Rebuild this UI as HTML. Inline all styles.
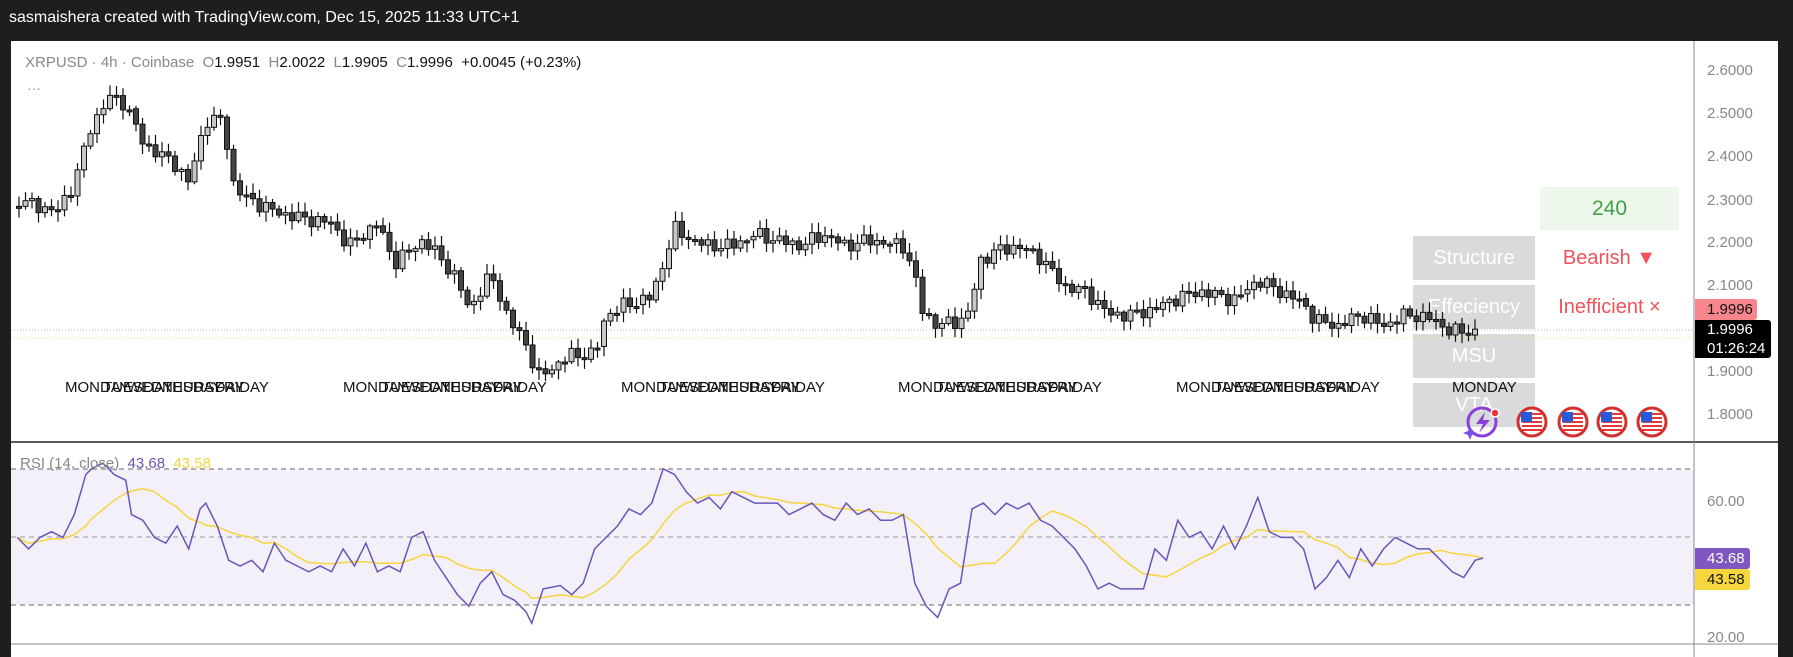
<!DOCTYPE html>
<html><head><meta charset="utf-8"><style>
html,body{margin:0;padding:0;}
body{width:1793px;height:657px;background:#1e1e1e;position:relative;overflow:hidden;font-family:"Liberation Sans",sans-serif;}
.t{position:absolute;white-space:nowrap;}
</style></head><body>
<div class="t" style="left:9px;top:9px;color:#fff;font-size:16px;">sasmaishera created with TradingView.com, Dec 15, 2025 11:33 UTC+1</div>
<div style="position:absolute;left:11px;top:41px;width:1767px;height:616px;background:#fff;"></div>
<div class="t" style="left:1413px;top:236px;width:122px;height:44px;background:#d9dadb;color:#fff;font-size:20px;line-height:44px;text-align:center;">Structure</div>
<div class="t" style="left:1413px;top:285px;width:122px;height:44px;background:#d9dadb;color:#fff;font-size:20px;line-height:44px;text-align:center;">Effeciency</div>
<div class="t" style="left:1413px;top:334px;width:122px;height:44px;background:#d9dadb;color:#fff;font-size:20px;line-height:44px;text-align:center;">MSU</div>
<div class="t" style="left:1413px;top:383px;width:122px;height:44px;background:#d9dadb;color:#fff;font-size:20px;line-height:44px;text-align:center;">VTA</div>
<svg id="s" width="1793" height="657" style="position:absolute;left:0;top:0;">
<rect x="11" y="469" width="1683" height="136" fill="#f3f0fa"/>
<line x1="11" y1="442" x2="1778" y2="442" stroke="#222" stroke-width="1.5"/>
<line x1="11" y1="644" x2="1778" y2="644" stroke="#888" stroke-width="1"/>
<line x1="1694" y1="41" x2="1694" y2="657" stroke="#888" stroke-width="1"/>
<line x1="11" y1="469" x2="1694" y2="469" stroke="#666" stroke-dasharray="5,4"/>
<line x1="11" y1="537" x2="1694" y2="537" stroke="#999" stroke-dasharray="5,4"/>
<line x1="11" y1="605" x2="1694" y2="605" stroke="#666" stroke-dasharray="5,4"/>
<line x1="11" y1="330" x2="1694" y2="330" stroke="#bbb" stroke-dasharray="1,2"/>
<line x1="11" y1="338" x2="1694" y2="338" stroke="#e8e070" stroke-dasharray="1,2"/>
<g id="c"></g>
<polyline id="ma" fill="none" stroke="#f5d63d" stroke-width="1.5"/>
<polyline id="rsi" fill="none" stroke="#6a55b8" stroke-width="1.5"/>
</svg>
<div class="t" style="left:25px;top:54px;font-size:15px;color:#888;">XRPUSD · 4h · Coinbase &nbsp;O<span style="color:#111">1.9951</span> &nbsp;H<span style="color:#111">2.0022</span> &nbsp;L<span style="color:#111">1.9905</span> &nbsp;C<span style="color:#111">1.9996</span> &nbsp;<span style="color:#111">+0.0045 (+0.23%)</span></div>
<div class="t" style="left:27px;top:80px;font-size:14px;color:#999;">···</div>
<div id="days"></div>
<div class="t" style="left:1452px;top:379px;font-size:15px;color:#111;">MONDAY</div>
<div class="t" style="left:1540px;top:187px;width:139px;height:43px;background:#eef7ec;color:#43a047;font-size:21px;line-height:43px;text-align:center;">240</div>
<div class="t" style="left:1540px;top:247px;width:139px;color:#f0525a;font-size:20px;text-align:center;">Bearish ▼</div>
<div class="t" style="left:1540px;top:296px;width:139px;color:#f0525a;font-size:20px;text-align:center;">Inefficient ×</div>
<svg width="1793" height="657" style="position:absolute;left:0;top:0;">
<g id="fl"></g>
<circle cx="1482" cy="422" r="14" fill="none" stroke="#8b3fd9" stroke-width="3"/>
<path d="M1485 412 L1476 424 L1483 424 L1479 433 L1490 420 L1483 420 Z" fill="#8b3fd9"/>
<circle cx="1495" cy="413" r="4" fill="#e5333d" stroke="#fff" stroke-width="1.5"/>
<path d="M1470 426 l2 5 5 2 -5 2 -2 5 -2 -5 -5 -2 5 -2z" fill="#7a4ee8"/>
</svg>
<div class="t" style="left:1707px;top:62px;font-size:15px;color:#888;">2.6000</div>
<div class="t" style="left:1707px;top:105px;font-size:15px;color:#888;">2.5000</div>
<div class="t" style="left:1707px;top:148px;font-size:15px;color:#888;">2.4000</div>
<div class="t" style="left:1707px;top:192px;font-size:15px;color:#888;">2.3000</div>
<div class="t" style="left:1707px;top:234px;font-size:15px;color:#888;">2.2000</div>
<div class="t" style="left:1707px;top:277px;font-size:15px;color:#888;">2.1000</div>
<div class="t" style="left:1707px;top:363px;font-size:15px;color:#888;">1.9000</div>
<div class="t" style="left:1707px;top:406px;font-size:15px;color:#888;">1.8000</div>
<div class="t" style="left:1695px;top:299px;width:62px;height:21px;background:#f7868c;border-radius:0 3px 3px 0;color:#111;font-size:15px;line-height:21px;padding-left:12px;box-sizing:border-box;">1.9996</div>
<div class="t" style="left:1695px;top:320px;width:76px;height:38px;background:#000;border-radius:0 3px 3px 0;color:#fff;font-size:15px;line-height:19px;padding-left:12px;box-sizing:border-box;">1.9996<br>01:26:24</div>
<div class="t" style="left:1707px;top:493px;font-size:15px;color:#888;">60.00</div>
<div class="t" style="left:1707px;top:629px;font-size:15px;color:#888;">20.00</div>
<div class="t" style="left:1695px;top:548px;width:55px;height:21px;background:#7e57c2;border-radius:0 3px 3px 0;color:#fff;font-size:15px;line-height:21px;padding-left:12px;box-sizing:border-box;">43.68</div>
<div class="t" style="left:1695px;top:569px;width:55px;height:21px;background:#f5d63d;border-radius:0 3px 3px 0;color:#111;font-size:15px;line-height:21px;padding-left:12px;box-sizing:border-box;">43.58</div>
<div class="t" style="left:20px;top:455px;font-size:15px;color:#888;">RSI (14, close) &nbsp;<span style="color:#6a55b8">43.68</span> &nbsp;<span style="color:#f5d63d">43.58</span></div>
<script>
(function(){
var S=1.1435,NS="http://www.w3.org/2000/svg";
var kp=[[15,175],[50,185],[65,160],[80,110],[95,85],[110,90],[125,125],[140,135],[155,145],[165,160],[180,105],[195,105],[205,165],[220,175],[240,185],[260,190],[290,195],[305,215],[330,195],[345,230],[370,210],[385,225],[400,245],[410,270],[430,240],[445,280],[460,300],[470,330],[485,320],[500,310],[520,310],[530,275],[550,265],[570,260],[580,230],[590,200],[605,210],[620,215],[640,215],[660,205],[680,210],[700,215],[720,205],[740,215],[760,210],[790,215],[800,240],[805,270],[820,285],[840,280],[850,270],[855,230],[870,220],[890,215],[910,225],[930,250],[950,255],[970,275],[990,275],[1010,270],[1030,260],[1050,255],[1080,262],[1100,245],[1120,255],[1140,265],[1150,280],[1170,285],[1190,275],[1210,285],[1230,275],[1250,278],[1270,290],[1290,290]];
function interp(a,x){for(var i=0;i<a.length-1;i++){if(x<=a[i+1][0]){var t=(x-a[i][0])/(a[i+1][0]-a[i][0]);return a[i][1]+t*(a[i+1][1]-a[i][1]);}}return a[a.length-1][1];}
var g=document.getElementById('c'),prev=null;
function el(n,at){var e=document.createElementNS(NS,n);for(var k in at)e.setAttribute(k,at[k]);return e;}
for(var x=19;x<=1478;x+=6.5){
 var xd=x/S,y=interp(kp,xd)*S+Math.sin(x*0.37)*5+Math.sin(x*1.7)*3;
 var o=prev===null?y:prev;var c=y;
 if(Math.abs(o-c)<2){c=o+2;}
 var tp=Math.min(o,c)-2-Math.abs(Math.sin(x*0.9))*8,bt=Math.max(o,c)+2+Math.abs(Math.cos(x*1.3))*8;
 var bull=c<o;
 g.appendChild(el('line',{x1:x,y1:tp,x2:x,y2:bt,stroke:'#111','stroke-width':1.2}));
 g.appendChild(el('rect',{x:x-2.5,y:Math.min(o,c),width:5,height:Math.abs(o-c),fill:bull?'#c8c8c8':'#444',stroke:'#111','stroke-width':1}));
 prev=y;
}
var rp=[[15,470],[25,480],[35,470],[45,465],[55,470],[65,450],[75,415],[80,410],[90,405],[100,415],[110,420],[115,450],[125,455],[135,470],[145,475],[155,460],[165,480],[175,445],[180,440],[190,460],[200,490],[210,495],[220,490],[230,500],[240,475],[250,490],[260,495],[270,500],[280,495],[290,500],[300,480],[310,495],[320,475],[330,500],[340,495],[350,500],[360,470],[370,465],[380,490],[390,505],[400,520],[410,530],[420,510],[430,500],[440,520],[450,525],[460,535],[465,545],[475,515],[490,512],[500,520],[510,510],[520,480],[530,470],[540,460],[550,445],[560,450],[570,440],[580,410],[590,415],[600,430],[610,440],[620,435],[630,445],[640,430],[650,435],[660,440],[680,440],[690,450],[700,445],[710,440],[720,450],[730,455],[740,440],[750,450],[760,445],[770,455],[780,455],[790,450],[800,510],[810,530],[820,540],[830,515],[840,510],[850,445],[860,440],[870,450],[880,440],[890,445],[900,440],[910,455],[920,460],[930,470],[940,480],[950,495],[960,515],[970,510],[980,515],[990,515],[1000,515],[1010,480],[1020,490],[1030,455],[1040,470],[1050,465],[1060,480],[1070,460],[1080,480],[1090,460],[1100,435],[1110,465],[1120,470],[1130,470],[1140,480],[1150,515],[1160,505],[1170,490],[1180,505],[1190,480],[1200,495],[1210,480],[1220,470],[1230,475],[1240,480],[1250,480],[1260,490],[1270,500],[1280,505],[1290,490],[1297,488]];
var pts=[],ys=[];
for(var i=0;i<rp.length;i++){var X=rp[i][0]*S,Y=rp[i][1]*S;pts.push(X.toFixed(1)+','+Y.toFixed(1));ys.push([X,Y]);}
document.getElementById('rsi').setAttribute('points',pts.join(' '));
var mp=[];for(var i=0;i<ys.length;i++){var s=0,n=0;for(var j=Math.max(0,i-7);j<=i;j++){s+=ys[j][1];n++;}mp.push(ys[i][0].toFixed(1)+','+(s/n).toFixed(1));}
document.getElementById('ma').setAttribute('points',mp.join(' '));
var d=document.getElementById('days'),gx=[65,343,621,898,1176],names=[['MONDAY',0],['TUESDAY',38],['WEDNESDAY',62],['THURSDAY',98],['FRIDAY',150]];
gx.forEach(function(b){names.forEach(function(n){var e=document.createElement('div');e.className='t';e.style.cssText='left:'+(b+n[1])+'px;top:379px;font-size:15px;color:#111;';e.textContent=n[0];d.appendChild(e);});});
var fl=document.getElementById('fl');
[1532,1573,1612,1652].forEach(function(cx){
 var cy=422;
 fl.appendChild(el('circle',{cx:cx,cy:cy,r:14,fill:'#fff',stroke:'#d32f2f','stroke-width':3}));
 for(var k=0;k<5;k++){fl.appendChild(el('rect',{x:cx-10,y:cy-9+k*4,width:20,height:2,fill:'#e53935'}));}
 fl.appendChild(el('rect',{x:cx-11,y:cy-10,width:11,height:10,fill:'#2a5bd7'}));
});
})();
</script>
</body></html>
